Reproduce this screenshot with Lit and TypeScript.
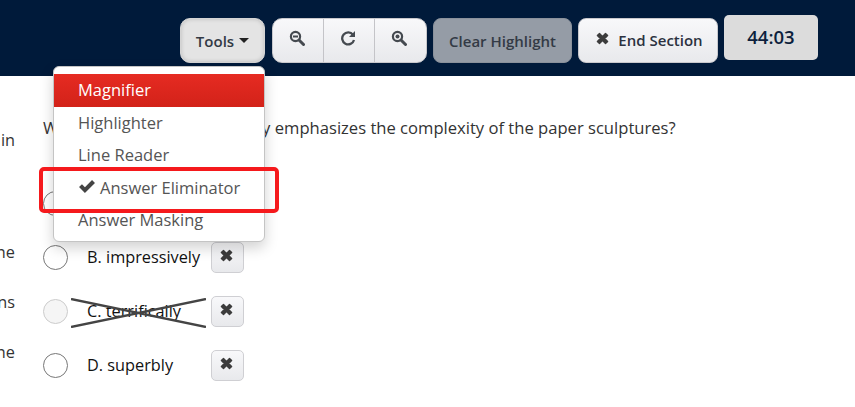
import { LitElement, html, css } from "lit";
import { customElement } from "lit/decorators.js";

const xIcon = html`<svg class="xi" viewBox="0 0 14 14"><path d="M2.2 4.2 4.2 2.2 7 5 9.8 2.2 11.8 4.2 9 7 11.8 9.8 9.8 11.8 7 9 4.2 11.8 2.2 9.8 5 7Z" fill="currentColor" stroke="currentColor" stroke-width="1.2" stroke-linejoin="round"/></svg>`;

@customElement("app-root")
export class AppRoot extends LitElement {
  static styles = css`
    :host { display: block; position: relative; width: 855px; height: 407px; overflow: hidden; background: #fff; font-family: "Open Sans", "Noto Sans", sans-serif; color: #333; }
    .top { height: 76px; box-sizing: border-box; background: #001a3a; display: flex; align-items: flex-start; padding: 18px 37px 0 180px; gap: 6px; }
    .btn { height: 45px; box-sizing: border-box; border: 1px solid #c8c8cc; border-radius: 8px; background: linear-gradient(#f8f8fa, #e8e9ec); display: flex; align-items: center; justify-content: center; font-size: 15px; font-weight: 600; color: #333a45; }
    .tools { width: 85px; margin-right: 1px; border-radius: 10px; border-color: #d4d4d4; background: #e4e4e4; box-shadow: inset 0 0 4px rgba(0,0,0,.18); gap: 5px; }
    .caret { width: 0; height: 0; border-left: 5px solid transparent; border-right: 5px solid transparent; border-top: 5px solid #222; }
    .zoom { width: 155px; border-radius: 10px; display: grid; grid-template-columns: 50px 51px 1fr; align-items: stretch; }
    .zoom span { display: flex; align-items: center; justify-content: center; border-left: 1px solid #c4c4c8; padding: 0 3px 5px 0; }
    .zoom span:first-child { border-left: 0; }
    .zoom svg { width: 16px; height: 16px; color: #454a50; }
    .clear { width: 139px; background: #959ca6; border-color: #8a919b; color: #333a45; }
    .end { width: 140px; gap: 8px; color: #2b3140; padding-bottom: 1px; padding-left: 2px; }
    .end .xi { width: 15px; height: 15px; color: #3c3c3c; margin-bottom: 4px; }
    .timer { width: 94px; height: 45px; margin-top: -3px; box-sizing: border-box; background: #dcdcdc; border-radius: 5px; display: flex; align-items: center; justify-content: center; font-size: 18.5px; font-weight: 600; color: #0d1f3c; padding-bottom: 2px; }
    .body { display: grid; grid-template-columns: 43px 1fr; font-size: 16px; color: #111; }
    .left { font-size: 16.3px; color: #333; height: 300px; }
    .left div { width: 15px; height: 21px; line-height: 21px; display: flex; justify-content: flex-end; }
    .left .f1 { margin-top: 54px; }
    .left .f2 { margin-top: 91px; }
    .left .f3, .left .f4 { margin-top: 29px; }
    .q { padding-top: 40px; height: 24px; line-height: 24px; color: #333; white-space: nowrap; font-size: 16.6px; }
    .opts { margin-top: 36px; }
    .opt { height: 54px; display: flex; align-items: center; color: #111; }
    .radio { width: 25px; height: 25px; box-sizing: border-box; border: 1px solid #777; border-radius: 50%; background: #fff; flex: none; }
    .label { width: 124px; margin-left: 19px; height: 28px; line-height: 28px; position: relative; white-space: nowrap; font-size: 16.3px; }
    .cx { width: 33px; height: 31px; box-sizing: border-box; border: 1px solid #cfcfd3; border-radius: 5px; background: linear-gradient(#f8f8fa, #e8e9ec); display: flex; align-items: center; justify-content: center; padding: 0 2px 3px 0; color: #3c3c3c; }
    .cx .xi { width: 15px; height: 15px; }
    .dim .radio { border-color: #ccc; background: #f5f5f5; }
    .strike { position: absolute; left: -16px; top: 1px; width: 135px; height: 30px; }
    .menu { position: absolute; left: 53px; top: 66px; width: 212px; height: 176px; box-sizing: border-box; background: #fff; border: 1px solid #c4c4c4; border-radius: 6px; box-shadow: 0 6px 14px rgba(0,0,0,.18); padding-top: 7px; font-size: 16.5px; color: #555; }
    .menu div { height: 32.6px; box-sizing: border-box; line-height: 31px; padding-left: 24px; white-space: nowrap; }
    .menu .active { background: linear-gradient(#e62b22, #d22219); color: #fff; font-weight: 500; }
    .menu .check { display: flex; align-items: center; padding: 0 0 2px 25px; gap: 5px; color: #555; }
    .menu .check svg { width: 16px; height: 13px; color: #444; margin-bottom: 2px; }
    .mark { position: absolute; left: 39px; top: 167px; width: 240px; height: 46px; box-sizing: border-box; border: 4px solid #f5191c; border-radius: 5px; }
  `;

  private opt(text: string, dim = false) {
    return html`<div class="opt ${dim ? "dim" : ""}">
      <span class="radio"></span>
      <span class="label">${text}${dim
        ? html`<svg class="strike" viewBox="0 0 135 30"><path d="M0 1 135 29M0 29 135 1" stroke="#444" stroke-width="2.4" fill="none"/></svg>`
        : ""}</span>
      <span class="cx">${xIcon}</span>
    </div>`;
  }

  render() {
    return html`
      <div class="top">
        <div class="btn tools">Tools <i class="caret"></i></div>
        <div class="btn zoom">
          <span><svg viewBox="0 0 16 16" fill="none" stroke="currentColor"><circle cx="6.5" cy="6.5" r="4.6" stroke-width="2.2"/><path d="M10 10 14.5 14.5" stroke-width="3" stroke-linecap="round"/><path d="M4 6.5h5" stroke-width="2"/></svg></span>
          <span><svg viewBox="0 0 16 16" fill="none" stroke="currentColor"><path d="M13 4.8A6 6 0 1 0 14 10" stroke-width="2.3"/><path d="M15 1v6h-6Z" fill="currentColor" stroke="none"/></svg></span>
          <span><svg viewBox="0 0 16 16" fill="none" stroke="currentColor"><circle cx="6.5" cy="6.5" r="4.6" stroke-width="2.2"/><path d="M10 10 14.5 14.5" stroke-width="3" stroke-linecap="round"/><circle cx="6.5" cy="6.5" r="2" fill="currentColor" stroke="none"/></svg></span>
        </div>
        <div class="btn clear">Clear Highlight</div>
        <div class="btn end">${xIcon}<span>End Section</span></div>
        <div class="timer">44:03</div>
      </div>
      <div class="body">
        <div class="left">
          <div class="f1">in</div>
          <div class="f2">ne</div>
          <div class="f3">ns</div>
          <div class="f4">ne</div>
        </div>
        <div>
          <div class="q">Which choice most effectively emphasizes the complexity of the paper sculptures?</div>
          <div class="opts">
            ${this.opt("")}
            ${this.opt("B. impressively")}
            ${this.opt("C. terrifically", true)}
            ${this.opt("D. superbly")}
          </div>
        </div>
      </div>
      <div class="menu">
        <div class="active">Magnifier</div>
        <div>Highlighter</div>
        <div>Line Reader</div>
        <div class="check"><svg viewBox="1.5 1.5 13.5 11"><path d="M1.5 7.5 4 5l2.5 2.6L12.5 1.5 15 4 6.5 12.5Z" fill="currentColor"/></svg>Answer Eliminator</div>
        <div>Answer Masking</div>
      </div>
      <div class="mark"></div>
    `;
  }
}
